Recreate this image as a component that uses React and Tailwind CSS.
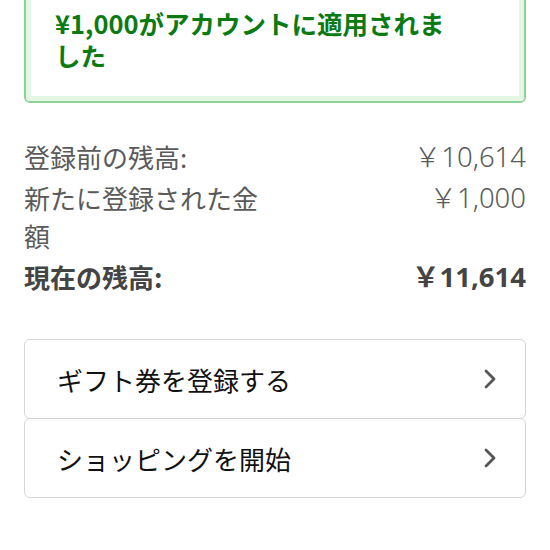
import React from "react";

const font = { fontFamily: '"Noto Sans CJK JP", "Noto Sans", sans-serif' };
const numFont = { fontFamily: '"Noto Sans", "Noto Sans CJK JP", sans-serif' };

function Chevron() {
  return (
    <svg width="14" height="22" viewBox="0 0 14 22" fill="none" className="shrink-0">
      <path d="M3 3 L11 11 L3 19" stroke="#555" strokeWidth="2.8" strokeLinecap="round" strokeLinejoin="round" />
    </svg>
  );
}

function Row({ label, value, bold }) {
  return (
    <div className={`flex justify-between items-start ${bold ? "font-bold text-[#444]" : "text-[#5a5a5a]"}`}>
      <div className="w-[236px] text-[26px] leading-[38px]">{label}</div>
      <div className={`text-[27.5px] leading-[38px] text-right ${bold ? "" : "font-light"}`} style={numFont}>
        {value}
      </div>
    </div>
  );
}

function LinkBox({ text, className }) {
  return (
    <div className={`h-[80px] border border-[#d6d6d6] rounded-[6px] flex items-center justify-between pl-[32px] pr-[28px] bg-white ${className || ""}`}>
      <span className="text-[26px] text-[#111]">{text}</span>
      <Chevron />
    </div>
  );
}

export default function App() {
  return (
    <div className="w-[550px] h-[550px] bg-white overflow-hidden px-[24px]" style={font}>
      <div className="-mt-[12px] border-2 border-[#8dd294] rounded-[6px] bg-white">
        <div className="border-[5px] border-[#e4f6e4] rounded-[3px] pl-[24px] pt-[12px] pb-[25px]">
          <div className="w-[405px] text-[25.5px] leading-[32px] font-bold text-[#0b7a12]">
            ¥1,000がアカウントに適用されました
          </div>
        </div>
      </div>
      <div className="mt-[35px] flex flex-col gap-[3px]">
        <Row label="登録前の残高:" value="￥10,614" />
        <Row label="新たに登録された金額" value="￥1,000" />
        <Row label="現在の残高:" value="￥11,614" bold />
      </div>
      <div className="mt-[43px] flex flex-col">
        <LinkBox text="ギフト券を登録する" />
        <LinkBox text="ショッピングを開始" className="-mt-px" />
      </div>
    </div>
  );
}
